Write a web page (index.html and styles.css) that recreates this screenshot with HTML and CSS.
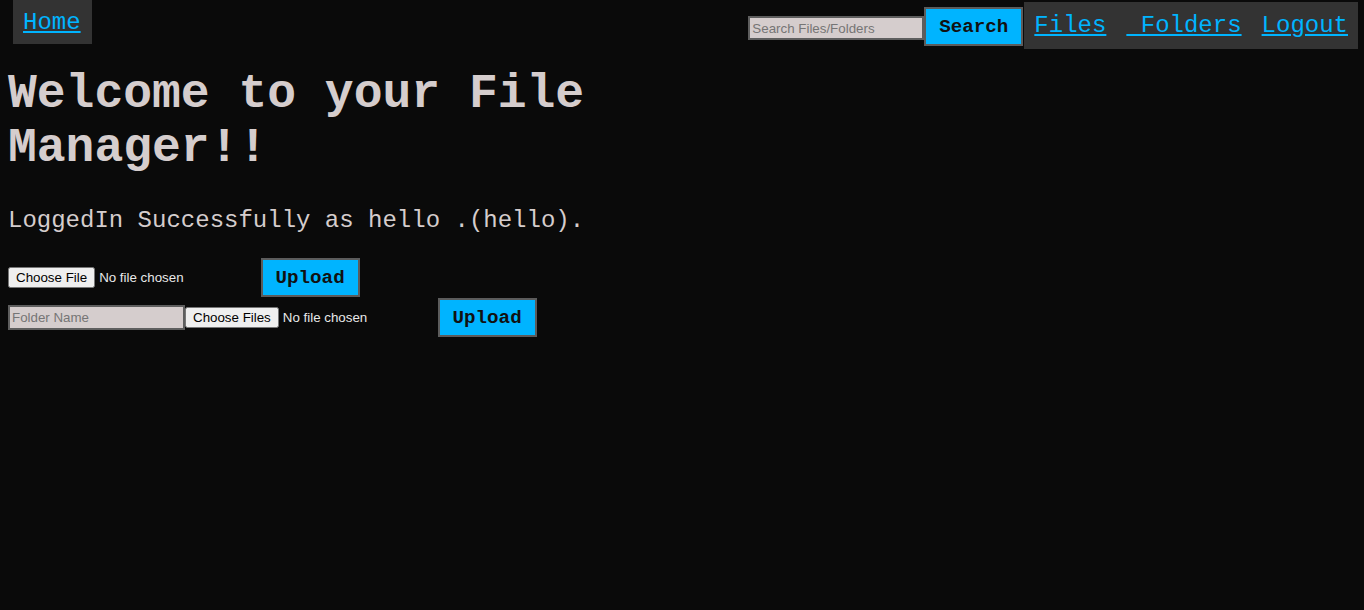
FILE: index.html
```html
<!DOCTYPE html>
<html lang="en">
<head>
<meta charset="utf-8">
<title>File Manager</title>
<link rel="stylesheet" href="styles.css">
</head>
<body>
<nav class="topnav">
  <div class="home-box"><a href="#" class="nav-link">Home</a></div>
  <div class="right-group">
    <form class="search-form">
      <input type="text" class="search-input" placeholder="Search Files/Folders">
      <button type="button" class="btn btn-search">Search</button>
    </form>
    <div class="links-box">
      <a href="#" class="nav-link">Files</a>
      <a href="#" class="nav-link">&nbsp;Folders</a>
      <a href="#" class="nav-link">Logout</a>
    </div>
  </div>
</nav>
<main class="content">
  <h1 class="title">Welcome to your File Manager!!</h1>
  <p class="status">LoggedIn Successfully as hello .(hello).</p>
  <form class="upload-row">
    <input type="file" class="file-input">
    <button type="button" class="btn">Upload</button>
  </form>
  <form class="upload-row">
    <input type="text" class="folder-input" placeholder="Folder Name"><input type="file" class="file-input" multiple>
    <button type="button" class="btn">Upload</button>
  </form>
</main>
</body>
</html>
```
FILE: styles.css
```css
html, body {
  background: #0a0a0a;
}
body {
  margin: 0;
  font-family: "Liberation Mono", "Courier New", monospace;
  color: #d5cdcd;
}
.topnav {
  display: flex;
  justify-content: space-between;
  align-items: flex-start;
  padding: 0 6px 0 13px;
  height: 49px;
}
.home-box {
  display: flex;
  background: #333333;
  padding: 9px 11px 8px 10px;
  line-height: 27px;
}
.nav-link {
  font-family: "Liberation Mono", "Courier New", monospace;
  font-size: 24px;
  line-height: 27px;
  color: #00b4ff;
  text-decoration: underline;
}
.right-group {
  display: flex;
  align-items: flex-start;
}
.search-form {
  display: flex;
  align-items: flex-start;
  margin: 0;
}
.search-input {
  margin-top: 16px;
  width: 176px;
  height: 24px;
  box-sizing: border-box;
  background: #d5cdcd;
  border: 2px solid #5e5e5e;
  font-family: Arial, "Liberation Sans", sans-serif;
  font-size: 13.33px;
  padding: 1px 2px;
}
.btn {
  background: #00b4ff;
  color: #111;
  border: 2px solid #5c5c5c;
  font-family: "Liberation Mono", "Courier New", monospace;
  font-weight: bold;
  font-size: 19.2px;
  width: 99px;
  height: 39px;
  padding: 0;
  box-sizing: border-box;
}
.btn-search {
  margin-top: 7px;
}
.links-box {
  margin-top: 2px;
  margin-left: 1px;
  background: #333333;
  display: flex;
  gap: 20px;
  padding: 10px 10px 10px 10px;
  line-height: 27px;
}
.content {
  padding: 0 8px;
}
.title {
  font-size: 48px;
  font-weight: bold;
  margin: 18px 0 32px;
  line-height: 54px;
  max-width: 600px;
  color: #d5cdcd;
}
.status {
  font-size: 24px;
  margin: 0 0 24px;
  line-height: 27px;
  color: #d5cdcd;
}
.upload-row {
  margin: 0;
  height: 40px;
}
.file-input {
  color: #e8e8e8;
  font-family: Arial, "Liberation Sans", sans-serif;
  font-size: 13.33px;
  width: 243px;
  vertical-align: middle;
}
.upload-row .btn {
  vertical-align: middle;
}
.folder-input {
  width: 177px;
  height: 25px;
  box-sizing: border-box;
  background: #d5cdcd;
  border: 2px solid #5e5e5e;
  font-family: Arial, "Liberation Sans", sans-serif;
  font-size: 13.33px;
  padding: 1px 2px;
  vertical-align: middle;
}
```
